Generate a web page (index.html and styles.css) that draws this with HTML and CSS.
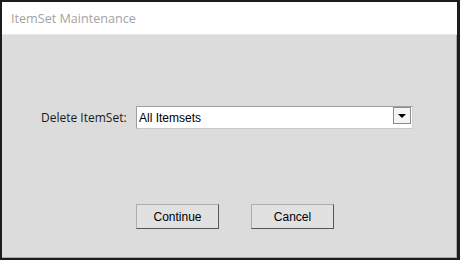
FILE: index.html
```html
<!DOCTYPE html>
<html lang="en">
<head>
  <meta charset="UTF-8" />
  <title>ItemSet Maintenance</title>
  <link rel="stylesheet" href="styles.css">
</head>
<body>
  <div class="window">
    <div class="titlebar">ItemSet Maintenance</div>
    <div class="content">
      <div class="form-row">
        <label class="label">Delete ItemSet:</label>
        <div class="select">
          <span class="select-value">All Itemsets</span>
          <span class="select-btn"><span class="arrow"></span></span>
        </div>
      </div>
      <div class="actions">
        <button class="btn">Continue</button>
        <button class="btn">Cancel</button>
      </div>
    </div>
  </div>
</body>
</html>
```

FILE: styles.css
```css
* {
  box-sizing: border-box;
}

body {
  margin: 0;
  background: #1c1c1c;
}

.window {
  width: 460px;
  height: 260px;
  border: 2px solid #1c1c1c;
  border-right-width: 3px;
  background: #dcdcdc;
  display: flex;
  flex-direction: column;
  box-shadow: inset -1px -1px 0 #a8a8a8;
}

.titlebar {
  height: 33px;
  background: #fff;
  border-bottom: 1px solid #e9e9e9;
  padding-left: 9px;
  display: flex;
  align-items: center;
  font-family: "Open Sans", sans-serif;
  font-size: 12.6px;
  color: #a3a3a3;
}

.content {
  flex: 1;
  display: flex;
  flex-direction: column;
}

.form-row {
  display: flex;
  align-items: center;
  margin-top: 71px;
  padding-left: 39px;
}

.label {
  font-family: "Open Sans", sans-serif;
  font-size: 12px;
  color: #1a1a1a;
  width: 88px;
}

.select {
  margin-left: 7px;
  width: 277px;
  height: 23px;
  background: #fff;
  border: 1px solid #a0a0a0;
  border-bottom-color: #c8c8c8;
  border-right-color: #d0d0d0;
  display: flex;
  align-items: center;
  padding: 0 1px 0 2px;
}

.select-value {
  flex: 1;
  font-family: "Liberation Sans", Arial, sans-serif;
  font-size: 12px;
  color: #000;
}

.select-btn {
  width: 18px;
  height: 17px;
  margin-bottom: 4px;
  border: 1px solid #8c8c8c;
  background: #f4f4f4;
  display: flex;
  align-items: center;
  justify-content: center;
}

.arrow {
  width: 0;
  height: 0;
  border-left: 4px solid transparent;
  border-right: 4px solid transparent;
  border-top: 4px solid #000;
}

.actions {
  display: flex;
  gap: 32px;
  margin-top: 75px;
  padding-left: 134px;
}

.btn {
  width: 83px;
  height: 25px;
  background: #e1e1e1;
  border: 1px solid #adadad;
  border-right-color: #555;
  border-bottom-color: #555;
  font-family: "Liberation Sans", Arial, sans-serif;
  font-size: 12px;
  color: #000;
  padding: 0;
}
```
